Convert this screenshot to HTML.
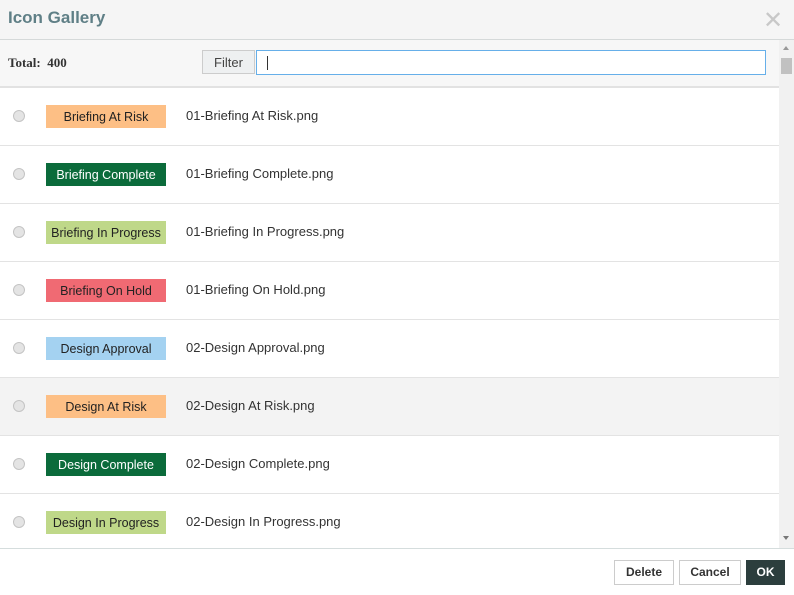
<!DOCTYPE html><html><head><style>
body{margin:0;width:794px;height:594px;overflow:hidden;font-family:"Liberation Sans",sans-serif;background:#fff;position:relative}
.hdr{position:absolute;left:0;top:0;width:794px;height:39px;background:#f5f5f5;border-bottom:1px solid #d5d9d9}
.hdr .t{position:absolute;left:8px;top:8px;font-size:17px;font-weight:bold;color:#5f7f86}
.x{position:absolute;left:763px;top:6px;font-size:24px;color:#c8c8c8}
.bar{position:absolute;left:0;top:40px;width:779px;height:46px;background:#f7f7f7;border-bottom:2px solid #e2e2e2}
.tot{position:absolute;left:8px;top:15px;font-family:"Liberation Serif",serif;font-weight:bold;font-size:13px;color:#333}
.fl{position:absolute;left:202px;top:10px;width:53px;height:24px;border:1px solid #ccc;background:#eef0f1;font-size:13px;color:#444;text-align:center;line-height:24px;box-sizing:border-box}
.in{position:absolute;left:256px;top:10px;width:510px;height:25px;border:1px solid #66afe9;background:#fff;box-sizing:border-box}
.in:after{content:"";position:absolute;left:10px;top:5px;width:1px;height:14px;background:#333}
.sb{position:absolute;left:779px;top:40px;width:15px;height:508px;background:#f1f1f1}
.row{position:absolute;left:0;width:779px;height:57px;border-bottom:1px solid #e3e3e3}
.rd{position:absolute;left:13px;top:22px;width:10px;height:10px;border-radius:50%;background:#e4e4e4;border:1px solid #c4c4c4}
.bd{position:absolute;left:46px;top:17px;width:120px;height:23px;font-size:12.5px;text-align:center;line-height:24px;color:#222}
.nm{position:absolute;left:186px;top:20px;font-size:13px;color:#333}
.ft{position:absolute;left:0;top:548px;width:794px;height:46px;border-top:1px solid #d5dddd}
.b{position:absolute;top:11px;height:25px;border:1px solid #ccc;box-sizing:border-box;font-size:12px;font-weight:bold;color:#333;text-align:center;line-height:23px;background:#fff}
</style></head><body>
<div class="hdr"><div class="t">Icon Gallery</div><div class="x">✕</div></div>
<div class="bar"><div class="tot">Total:&nbsp; 400</div><div class="fl">Filter</div><div class="in"></div></div>
<div class="sb"><div style="position:absolute;left:2px;top:18px;width:11px;height:16px;background:#c1c1c1"></div>
<div style="position:absolute;left:4px;top:6px;border:3.5px solid transparent;border-bottom:4px solid #999;border-top:0"></div>
<div style="position:absolute;left:4px;top:496px;border:3.5px solid transparent;border-top:4px solid #777;border-bottom:0"></div></div>
<div class="row" style="top:88px"><div class="rd"></div><div class="bd" style="background:#fdbf85">Briefing At Risk</div><div class="nm">01-Briefing At Risk.png</div></div>
<div class="row" style="top:146px"><div class="rd"></div><div class="bd" style="background:#0b6b3b;color:#fff">Briefing Complete</div><div class="nm">01-Briefing Complete.png</div></div>
<div class="row" style="top:204px"><div class="rd"></div><div class="bd" style="background:#bfd889">Briefing In Progress</div><div class="nm">01-Briefing In Progress.png</div></div>
<div class="row" style="top:262px"><div class="rd"></div><div class="bd" style="background:#f06a73">Briefing On Hold</div><div class="nm">01-Briefing On Hold.png</div></div>
<div class="row" style="top:320px"><div class="rd"></div><div class="bd" style="background:#a4d2f1">Design Approval</div><div class="nm">02-Design Approval.png</div></div>
<div class="row" style="top:378px;background:#f3f3f3"><div class="rd"></div><div class="bd" style="background:#fdbf85">Design At Risk</div><div class="nm">02-Design At Risk.png</div></div>
<div class="row" style="top:436px"><div class="rd"></div><div class="bd" style="background:#0b6b3b;color:#fff">Design Complete</div><div class="nm">02-Design Complete.png</div></div>
<div class="row" style="top:494px;border:0"><div class="rd"></div><div class="bd" style="background:#bfd889">Design In Progress</div><div class="nm">02-Design In Progress.png</div></div>
<div class="ft"><div class="b" style="left:614px;width:60px">Delete</div><div class="b" style="left:679px;width:62px">Cancel</div><div class="b" style="left:746px;width:39px;background:#2c3e3d;border-color:#2c3e3d;color:#fff">OK</div></div>
</body></html>
